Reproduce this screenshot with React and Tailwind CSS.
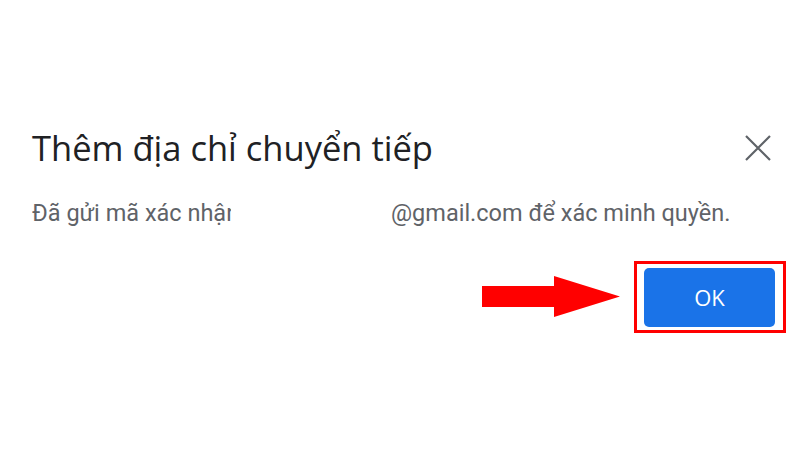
import React from "react";

export default function App() {
  return (
    <div className="w-[800px] h-[450px] bg-white overflow-hidden flex flex-col" style={{ fontFamily: "Roboto, 'Noto Sans', sans-serif" }}>
      <div className="flex items-center justify-between pl-[32px] pr-[29px] pt-[128px]">
        <h1 className="text-[34.5px] leading-[40px] text-[#202124] font-normal" style={{ fontFamily: "'Open Sans', 'Noto Sans', sans-serif" }}>
          Thêm địa chỉ chuyển tiếp
        </h1>
        <svg width="26" height="26" viewBox="0 0 26 26" className="text-[#5f6368]">
          <path d="M1 1 L25 25 M25 1 L1 25" stroke="currentColor" strokeWidth="2.2" fill="none" />
        </svg>
      </div>
      <div className="flex items-center pl-[32px] mt-[31px] text-[23.5px] leading-[28px] text-[#5f6368]">
        <span className="w-[199px] overflow-hidden whitespace-nowrap">Đã gửi mã xác nhận</span>
        <span className="ml-[160px] whitespace-nowrap">@gmail.com để xác minh quyền.</span>
      </div>
      <div className="flex items-center justify-end pr-[14px] mt-[34px]">
        <svg width="138" height="42" viewBox="0 0 138 42" className="mr-[14px]">
          <polygon points="0,10 72,10 72,0 138,20.5 72,41 72,31 0,31" fill="#ff0000" />
        </svg>
        <div className="border-[3px] border-[#ff0000] pl-[7px] pr-[8px] pt-[4px] pb-[3px]">
          <button className="w-[131px] h-[59px] rounded-[5px] bg-[#1a73e8] text-white text-[22px] font-medium" style={{ fontFamily: "'Open Sans', 'Noto Sans', sans-serif" }}>
            OK
          </button>
        </div>
      </div>
    </div>
  );
}
